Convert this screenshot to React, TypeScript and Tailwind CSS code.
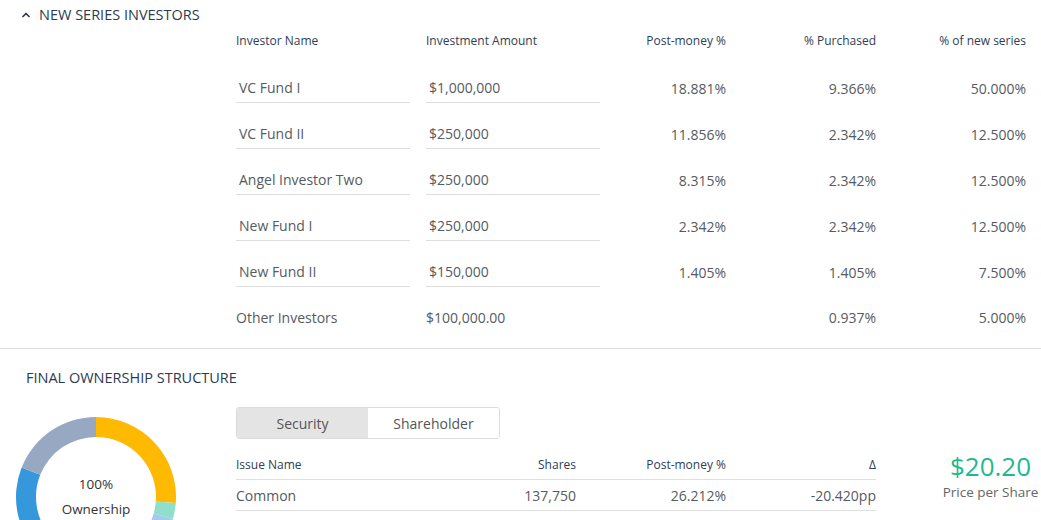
import { ChevronUp } from "lucide-react";

const investors = [
  { name: "VC Fund I", amount: "$1,000,000", post: "18.881%", purchased: "9.366%", series: "50.000%" },
  { name: "VC Fund II", amount: "$250,000", post: "11.856%", purchased: "2.342%", series: "12.500%" },
  { name: "Angel Investor Two", amount: "$250,000", post: "8.315%", purchased: "2.342%", series: "12.500%" },
  { name: "New Fund I", amount: "$250,000", post: "2.342%", purchased: "2.342%", series: "12.500%" },
  { name: "New Fund II", amount: "$150,000", post: "1.405%", purchased: "1.405%", series: "7.500%" },
];

// donut segments, percent of circle, clockwise from 12 o'clock
const segments = [
  { pct: 26.212, color: "#ffb901" },
  { pct: 3.2, color: "#8fdfcb" },
  { pct: 16, color: "#a6c9ef" },
  { pct: 35.6, color: "#3498db" },
  { pct: 18.988, color: "#97a9c2" },
];

function arcPath(cx: number, cy: number, r0: number, r1: number, a0: number, a1: number) {
  const p = (r: number, a: number) => {
    const rad = ((a - 90) * Math.PI) / 180;
    return `${cx + r * Math.cos(rad)} ${cy + r * Math.sin(rad)}`;
  };
  const large = a1 - a0 > 180 ? 1 : 0;
  return `M ${p(r1, a0)} A ${r1} ${r1} 0 ${large} 1 ${p(r1, a1)} L ${p(r0, a1)} A ${r0} ${r0} 0 ${large} 0 ${p(r0, a0)} Z`;
}

function Donut() {
  let acc = 0;
  return (
    <div className="relative w-[160px] h-[160px]">
      <svg width="160" height="160" viewBox="0 0 160 160">
        {segments.map((s, i) => {
          const a0 = (acc / 100) * 360;
          acc += s.pct;
          const a1 = (acc / 100) * 360;
          return <path key={i} d={arcPath(80, 80, 60, 80, a0, a1)} fill={s.color} />;
        })}
      </svg>
      <div className="absolute inset-0 flex flex-col items-center justify-center text-[13.5px] text-[#333] leading-[25px]">
        <span>100%</span>
        <span>Ownership</span>
      </div>
    </div>
  );
}

const cols = "grid grid-cols-[190px_190px_110px_150px_150px]";

export default function App() {
  return (
    <div className="w-[1041px] h-[520px] overflow-hidden bg-white font-['Open_Sans',sans-serif] text-[#555b62]">
      {/* section header */}
      <div className="h-[30px] flex items-center pl-[20px] gap-[7px] text-[#2c3a52] text-[14.5px]">
        <ChevronUp size={12} strokeWidth={3.5} />
        <span>NEW SERIES INVESTORS</span>
      </div>

      {/* investor table */}
      <div className="pl-[236px]">
        <div className={`${cols} h-[22px] items-center text-[12px] text-[#2f3d56]`}>
          <span>Investor Name</span>
          <span>Investment Amount</span>
          <span className="text-right">Post-money %</span>
          <span className="text-right">% Purchased</span>
          <span className="text-right">% of new series</span>
        </div>
        <div className="mt-[13px] text-[14px]">
          {investors.map((r) => (
            <div key={r.name} className={`${cols} h-[46px] items-center`}>
              <div className="w-[174px] h-[30px] flex items-center pl-[3px] border-b border-[#dedede]">{r.name}</div>
              <div className="w-[174px] h-[30px] flex items-center pl-[3px] border-b border-[#dedede]">{r.amount}</div>
              <span className="text-right">{r.post}</span>
              <span className="text-right">{r.purchased}</span>
              <span className="text-right">{r.series}</span>
            </div>
          ))}
          <div className={`${cols} h-[44px] items-center`}>
            <span>Other Investors</span>
            <span>$100,000.00</span>
            <span />
            <span className="text-right">0.937%</span>
            <span className="text-right">5.000%</span>
          </div>
        </div>
      </div>

      <div className="mt-[9px] border-t border-[#e0e0e0]" />

      {/* final ownership */}
      <div className="h-[30px] mt-[14px] flex items-center pl-[26px] text-[14.5px] text-[#2c3a52]">
        FINAL OWNERSHIP STRUCTURE
      </div>

      <div className="flex mt-[14px]">
        <div className="w-[236px] shrink-0 pl-[16px] pt-[10px]">
          <Donut />
        </div>
        <div className="w-[640px] shrink-0">
          <div className="flex w-[264px] h-[32px] rounded-[3px] border border-[#dcdcdc] overflow-hidden text-[14px]">
            <div className="flex-1 flex items-center justify-center bg-[#e4e4e4] text-[#555]">Security</div>
            <div className="flex-1 flex items-center justify-center bg-white text-[#555]">Shareholder</div>
          </div>
          <div className="grid grid-cols-[200px_140px_150px_150px] h-[41px] pt-[11px] items-center text-[12px] text-[#2f3d56] border-b border-[#e0e0e0]">
            <span>Issue Name</span>
            <span className="text-right">Shares</span>
            <span className="text-right">Post-money %</span>
            <span className="text-right">Δ</span>
          </div>
          <div className="grid grid-cols-[200px_140px_150px_150px] h-[31px] items-center text-[14px] border-b border-[#e0e0e0]">
            <span>Common</span>
            <span className="text-right">137,750</span>
            <span className="text-right">26.212%</span>
            <span className="text-right">-20.420pp</span>
          </div>
        </div>
        <div className="flex-1 flex flex-col items-center pt-[44px] pl-[64px]">
          <span className="text-[26px] leading-[30px] text-[#1fb98d]">$20.20</span>
          <span className="text-[13.5px] text-[#666] leading-[18px] mt-[2px] whitespace-nowrap">Price per Share</span>
        </div>
      </div>
    </div>
  );
}
